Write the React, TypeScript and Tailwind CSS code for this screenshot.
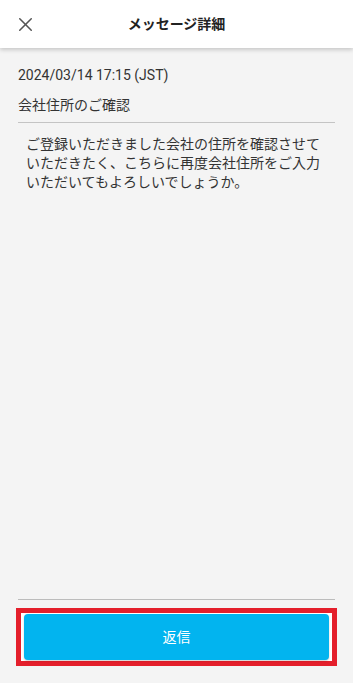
import { X } from "lucide-react";

const body =
  "ご登録いただきました会社の住所を確認させていただきたく、こちらに再度会社住所をご入力いただいてもよろしいでしょうか。";

export default function App() {
  return (
    <main
      className="flex h-[683px] flex-col bg-[#f4f4f4] text-[#333333]"
      style={{ fontFamily: 'Roboto, "Noto Sans CJK JP", sans-serif' }}
    >
      {/* header */}
      <header className="relative z-10 flex h-[48px] shrink-0 items-center bg-white shadow-[0_2px_4px_rgba(0,0,0,0.18)]">
        <button className="flex h-[48px] w-[50px] items-center justify-center text-[#555555]">
          <X size={23} strokeWidth={1.6} />
        </button>
        <h1 className="absolute left-1/2 -translate-x-1/2 text-[14px] font-bold text-[#222222]">
          メッセージ詳細
        </h1>
      </header>

      <section className="flex flex-1 flex-col px-[18px]">
        <p className="mt-[17px] text-[14px] leading-[20px]">2024/03/14 17:15 (JST)</p>
        <p className="mt-[10px] text-[14px] leading-[20px]">会社住所のご確認</p>
        <div className="mt-[7px] border-t border-[#c4c4c4]" />

        <p className="px-2 pt-[12px] text-[14px] leading-[19px]">{body}</p>

        <div className="flex-1" />

        <div className="border-t border-[#bcbcbc]" />
        <div className="-mx-[2px] mb-[17px] mt-[8px] border-[5px] border-[#e41f2b] bg-white px-[3px] py-[1px]">
          <button className="flex h-[46px] w-full items-center justify-center rounded-[4px] bg-[#02b4ef] text-[14px] text-white shadow-[0_1px_2px_rgba(0,0,0,0.2)]">
            返信
          </button>
        </div>
      </section>
    </main>
  );
}
